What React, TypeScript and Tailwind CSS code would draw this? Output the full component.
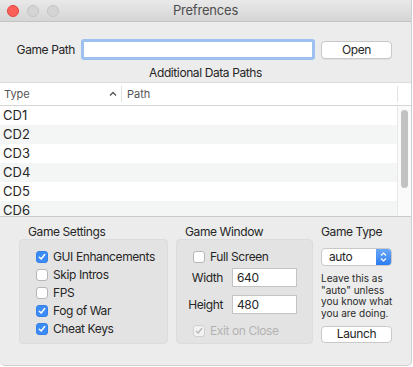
import { useState } from "react";

const font = { fontFamily: "Inter, 'Noto Sans', sans-serif" };

type Check = {
  label: string;
  checked: boolean;
};

function CheckBox({ checked, disabled }: { checked: boolean; disabled?: boolean }) {
  if (disabled) {
    return (
      <span className="w-[12px] h-[12px] rounded-[3px] border border-[#d0d0d0] bg-[#f2f2f2] flex items-center justify-center">
        <svg width="8" height="8" viewBox="0 0 8 8">
          <path d="M1.3 4.2 L3.2 6 L6.7 1.5" fill="none" stroke="#b9b9b9" strokeWidth="1.4" strokeLinecap="round" strokeLinejoin="round" />
        </svg>
      </span>
    );
  }
  if (checked) {
    return (
      <span className="w-[12px] h-[12px] rounded-[3px] bg-[#3b8cf6] border border-[#3580e8] flex items-center justify-center">
        <svg width="8" height="8" viewBox="0 0 8 8">
          <path d="M1.3 4.2 L3.2 6 L6.7 1.5" fill="none" stroke="#ffffff" strokeWidth="1.5" strokeLinecap="round" strokeLinejoin="round" />
        </svg>
      </span>
    );
  }
  return <span className="w-[12px] h-[12px] rounded-[3px] bg-white border border-[#b6b6b6]" />;
}

export default function App() {
  const [settings] = useState<Check[]>([
    { label: "GUI Enhancements", checked: true },
    { label: "Skip Intros", checked: false },
    { label: "FPS", checked: false },
    { label: "Fog of War", checked: true },
    { label: "Cheat Keys", checked: true },
  ]);
  const rows = ["CD1", "CD2", "CD3", "CD4", "CD5", "CD6"];

  return (
    <div className="w-[413px] h-[367px] bg-white" style={font}>
      <div className="w-[412px] h-[366px] bg-[#ececec] rounded-b-[5px] border-r border-b border-[#cfcfcf] overflow-hidden flex flex-col text-[#262626] tracking-[-0.4px]">
        {/* title bar */}
        <div className="h-[22px] shrink-0 relative flex items-center justify-center bg-gradient-to-b from-[#e9e9e9] to-[#d5d5d5] border-b border-[#c4c4c4]">
          <div className="absolute left-[7px] top-[5px] flex gap-[8px]">
            <span className="w-[12px] h-[12px] rounded-full bg-[#fc5f57] border border-[#e0443e]" />
            <span className="w-[12px] h-[12px] rounded-full bg-[#d4d4d4] border border-[#c4c4c4]" />
            <span className="w-[12px] h-[12px] rounded-full bg-[#d4d4d4] border border-[#c4c4c4]" />
          </div>
          <span className="text-[13px] text-[#4d4d4d] leading-none tracking-[-0.2px]">Prefrences</span>
        </div>

        {/* game path */}
        <div className="mt-[17px] h-[21px] flex items-center">
          <span className="w-[75px] text-right text-[12px]">Game Path</span>
          <div className="ml-[6px] w-[234px] h-[21px] rounded-[3px] border-[3px] border-[#9dc1f0] bg-white" />
          <button className="ml-[6px] w-[71px] h-[18px] rounded-[4px] bg-white border border-[#c8c8c8] shadow-[0_1px_0_rgba(0,0,0,0.05)] text-[12px] leading-none">
            Open
          </button>
        </div>
        <div className="mt-[6px] h-[14px] text-center text-[12px] leading-[14px]">Additional Data Paths</div>

        {/* table */}
        <div className="mt-[2px] border-t border-[#dcdcdc] bg-white flex flex-col">
          <div className="h-[23px] flex items-center border-b border-[#d6d6d6] text-[11px] text-[#555] tracking-normal">
            <div className="w-[121px] pl-[4px] flex items-center justify-between pr-[4px]">
              <span>Type</span>
              <svg width="8" height="6" viewBox="0 0 8 6">
                <path d="M1 4.5 L4 1.5 L7 4.5" fill="none" stroke="#555" strokeWidth="1.3" />
              </svg>
            </div>
            <div className="w-px h-[16px] bg-[#e2e2e2]" />
            <div className="flex-1 pl-[5px]">Path</div>
            <div className="w-px h-[16px] bg-[#e2e2e2]" />
            <div className="w-[13px]" />
          </div>
          <div className="h-[111px] flex border-b border-[#cbcbcb] overflow-hidden">
            <div className="flex-1 flex flex-col">
              {rows.map((r, i) => (
                <div
                  key={r}
                  className={`h-[19px] shrink-0 pl-[3px] flex items-center text-[13px] tracking-normal ${i % 2 ? "bg-[#f4f5f5]" : "bg-white"}`}
                >
                  {r}
                </div>
              ))}
            </div>
            <div className="w-[14px] bg-[#fafafa] border-l border-[#e8e8e8] pt-[4px] flex justify-center">
              <div className="w-[7px] h-[78px] rounded-full bg-[#c2c2c2]" />
            </div>
          </div>
        </div>

        {/* bottom settings */}
        <div className="pt-[8px] pl-[19px] flex gap-[8px]">
          <div className="w-[149px] flex flex-col">
            <div className="h-[14px] pl-[9px] text-[12px] leading-[14px]">Game Settings</div>
            <div className="h-[105px] rounded-[4px] bg-[#e3e3e3] border border-[#dcdcdc] pt-[11px] pl-[16px] flex flex-col gap-[6px]">
              {settings.map((s) => (
                <div key={s.label} className="h-[12px] flex items-center gap-[5px] text-[12px]">
                  <CheckBox checked={s.checked} />
                  <span>{s.label}</span>
                </div>
              ))}
            </div>
          </div>

          <div className="w-[137px] flex flex-col">
            <div className="h-[14px] pl-[9px] text-[12px] leading-[14px]">Game Window</div>
            <div className="h-[105px] rounded-[4px] bg-[#e3e3e3] border border-[#dcdcdc] pt-[11px] flex flex-col text-[12px]">
              <div className="h-[12px] pl-[16px] flex items-center gap-[5px]">
                <CheckBox checked={false} />
                <span>Full Screen</span>
              </div>
              <div className="mt-[5px] h-[19px] flex items-center">
                <span className="w-[46px] text-right">Width</span>
                <div className="ml-[9px] w-[65px] h-[19px] bg-white border border-[#c4c4c4] pl-[4px] flex items-center">640</div>
              </div>
              <div className="mt-[8px] h-[19px] flex items-center">
                <span className="w-[46px] text-right">Height</span>
                <div className="ml-[9px] w-[65px] h-[19px] bg-white border border-[#c4c4c4] pl-[4px] flex items-center">480</div>
              </div>
              <div className="mt-[11px] h-[12px] pl-[16px] flex items-center gap-[5px] text-[#b3b3b3]">
                <CheckBox checked disabled />
                <span>Exit on Close</span>
              </div>
            </div>
          </div>

          <div className="w-[71px] flex flex-col">
            <div className="h-[14px] text-[12px] leading-[14px]">Game Type</div>
            <div className="mt-[9px] h-[18px] rounded-[4px] bg-white border border-[#c8c8c8] flex overflow-hidden">
              <span className="flex-1 pl-[7px] text-[12px] leading-[16px]">auto</span>
              <span className="w-[15px] bg-gradient-to-b from-[#69a8fa] to-[#2a7cf0] flex items-center justify-center">
                <svg width="7" height="10" viewBox="0 0 7 10">
                  <path d="M1 3.5 L3.5 1 L6 3.5 M1 6.5 L3.5 9 L6 6.5" fill="none" stroke="#fff" strokeWidth="1.2" />
                </svg>
              </span>
            </div>
            <div className="mt-[7px] text-[10px] leading-[11.7px] text-[#2b2b2b] tracking-normal whitespace-nowrap">
              Leave this as
              <br />
              "auto" unless
              <br />
              you know what
              <br />
              you are doing.
            </div>
            <button className="mt-[6px] h-[17px] rounded-[4px] bg-white border border-[#c8c8c8] text-[12px] leading-none">
              Launch
            </button>
          </div>
        </div>
      </div>
    </div>
  );
}
